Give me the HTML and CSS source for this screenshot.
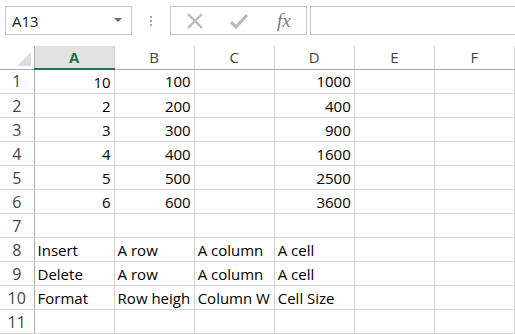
FILE: index.html
```html
<!DOCTYPE html>
<html lang="en">
<head>
    <meta charset="UTF-8">
    <title>Sheet</title>
    <link rel="stylesheet" href="styles.css">
</head>
<body>
    <div class="formula-bar">
        <div class="name-box">
            <span>A13</span>
            <svg class="arrow" width="8" height="5" viewBox="0 0 8 5"><path d="M0 0h8L4 4z" fill="#6b6b6b"/></svg>
        </div>
        <div class="dots"><i></i><i></i><i></i></div>
        <div class="buttons">
            <svg width="20" height="20" viewBox="0 0 20 20"><path d="M3 3L17 17M17 3L3 17" stroke="#b8b8b8" stroke-width="2.2"/></svg>
            <svg width="20" height="20" viewBox="0 0 20 20"><path d="M2 11l5 5L18 4" stroke="#b8b8b8" stroke-width="3" fill="none"/></svg>
            <span class="fx">fx</span>
        </div>
        <div class="formula-input"></div>
    </div>

    <table class="sheet">
        <colgroup>
            <col class="rh">
            <col><col><col><col><col><col>
        </colgroup>
        <thead>
            <tr>
                <th class="corner"><span class="tri"></span></th>
                <th class="active">A</th>
                <th>B</th>
                <th>C</th>
                <th>D</th>
                <th>E</th>
                <th>F</th>
            </tr>
        </thead>
        <tbody>
            <tr><th>1</th><td class="num">10</td><td class="num">100</td><td></td><td class="num">1000</td><td></td><td></td></tr>
            <tr><th>2</th><td class="num">2</td><td class="num">200</td><td></td><td class="num">400</td><td></td><td></td></tr>
            <tr><th>3</th><td class="num">3</td><td class="num">300</td><td></td><td class="num">900</td><td></td><td></td></tr>
            <tr><th>4</th><td class="num">4</td><td class="num">400</td><td></td><td class="num">1600</td><td></td><td></td></tr>
            <tr><th>5</th><td class="num">5</td><td class="num">500</td><td></td><td class="num">2500</td><td></td><td></td></tr>
            <tr><th>6</th><td class="num">6</td><td class="num">600</td><td></td><td class="num">3600</td><td></td><td></td></tr>
            <tr><th>7</th><td></td><td></td><td></td><td></td><td></td><td></td></tr>
            <tr><th>8</th><td>Insert</td><td>A row</td><td>A column</td><td>A cell</td><td></td><td></td></tr>
            <tr><th>9</th><td>Delete</td><td>A row</td><td>A column</td><td>A cell</td><td></td><td></td></tr>
            <tr><th>10</th><td>Format</td><td>Row heigh</td><td>Column W</td><td>Cell Size</td><td></td><td></td></tr>
            <tr><th>11</th><td></td><td></td><td></td><td></td><td></td><td></td></tr>
        </tbody>
    </table>
</body>
</html>
```

FILE: styles.css
```css
body {
    margin: 0;
    background: #fff;
    font-family: "Open Sans", "Liberation Sans", sans-serif;
    overflow: hidden;
    width: 515px;
    height: 334px;
}
.formula-bar {
    height: 46px;
    display: flex;
    align-items: flex-start;
    padding-top: 6px;
    padding-left: 5px;
    box-sizing: border-box;
}
.name-box {
    width: 127px;
    height: 29px;
    border: 1px solid #c6c6c6;
    box-sizing: border-box;
    display: flex;
    align-items: center;
    justify-content: space-between;
    padding: 0 9px 0 6px;
    font-size: 15px;
    color: #222;
}
.dots {
    width: 38px;
    height: 29px;
    display: flex;
    flex-direction: column;
    align-items: center;
    justify-content: center;
    gap: 2px;
}
.dots i {
    width: 2px;
    height: 2px;
    background: #a8a8a8;
}
.buttons {
    width: 137px;
    height: 29px;
    border: 1px solid #c6c6c6;
    box-sizing: border-box;
    display: flex;
    align-items: center;
    gap: 24px;
    padding-left: 14px;
}
.fx {
    font-family: "Liberation Serif", serif;
    font-style: italic;
    font-size: 19px;
    color: #777;
    margin-left: 4px;
}
.formula-input {
    flex: 1;
    height: 29px;
    margin-left: 3px;
    border: 1px solid #c6c6c6;
    border-right: none;
    box-sizing: border-box;
}
.sheet {
    border-collapse: collapse;
    table-layout: fixed;
    width: 515px;
    font-family: "Open Sans", "Liberation Sans", sans-serif;
    font-size: 15px;
}
.sheet col {
    width: 80px;
}
.sheet col.rh {
    width: 34px;
}
.sheet thead th {
    height: 22px;
    padding: 0;
    font-weight: normal;
    color: #444;
    font-size: 15px;
    border-right: 1px solid #d4d4d4;
    border-bottom: 1px solid #ababab;
    background: #fff;
}
.sheet thead th.active {
    background: #e1e1e1;
    color: #217346;
    font-weight: bold;
    border-bottom: 2px solid #217346;
}
.sheet th.corner {
    position: relative;
    border-right: 1px solid #ababab;
}
.tri {
    position: absolute;
    right: 3px;
    bottom: 3px;
    width: 0;
    height: 0;
    border-left: 14px solid transparent;
    border-bottom: 14px solid #dcdcdc;
}
.sheet tbody th {
    height: 23px;
    padding: 0;
    font-weight: normal;
    font-size: 16px;
    color: #444;
    text-align: center;
    border-right: 1px solid #ababab;
    border-bottom: 1px solid #d4d4d4;
}
.sheet td {
    height: 23px;
    padding: 0 3px;
    border-right: 1px solid #d4d4d4;
    border-bottom: 1px solid #d4d4d4;
    white-space: nowrap;
    overflow: hidden;
    color: #000;
}
.sheet td.num {
    text-align: right;
}
```
